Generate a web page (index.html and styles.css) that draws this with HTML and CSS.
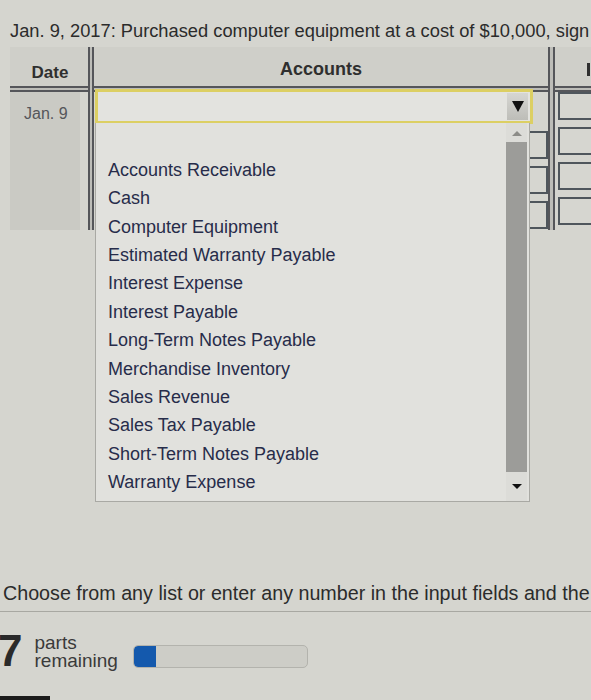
FILE: index.html
```html
<!DOCTYPE html>
<html>
<head>
<meta charset="utf-8">
<link rel="stylesheet" href="styles.css">
</head>
<body>
<div class="page">
  <p class="title">Jan. 9, 2017: Purchased computer equipment at a cost of $10,000, sign</p>
  <div class="journal">
    <div class="hdr date-h">Date</div>
    <div class="vline v1"></div>
    <div class="hdr acc-h">Accounts</div>
    <div class="vline v2"></div>
    <div class="hdr deb-h"><span class="deb-mark"></span></div>
    <div class="hline"></div>
    <div class="date-body"><span>Jan. 9</span></div>
    <div class="acc-body">
      <div class="select">
        <div class="select-val"></div>
        <div class="select-btn"><span class="tri-down"></span></div>
      </div>
      <div class="row"><div class="box small"></div></div>
      <div class="row"><div class="box small"></div></div>
      <div class="row"><div class="box small"></div></div>
      <div class="list">
        <ul class="items">
          <li>Accounts Receivable</li>
          <li>Cash</li>
          <li>Computer Equipment</li>
          <li>Estimated Warranty Payable</li>
          <li>Interest Expense</li>
          <li>Interest Payable</li>
          <li>Long-Term Notes Payable</li>
          <li>Merchandise Inventory</li>
          <li>Sales Revenue</li>
          <li>Sales Tax Payable</li>
          <li>Short-Term Notes Payable</li>
          <li>Warranty Expense</li>
        </ul>
        <div class="scrollbar">
          <div class="sb-up"><span class="tri-up"></span></div>
          <div class="sb-thumb"></div>
          <div class="sb-down"><span class="tri-down sm"></span></div>
        </div>
      </div>
    </div>
    <div class="deb-body">
      <div class="box wide"></div>
      <div class="box wide"></div>
      <div class="box wide"></div>
      <div class="box wide"></div>
    </div>
  </div>
  <p class="hint">Choose from any list or enter any number in the input fields and the</p>
  <div class="rule"></div>
  <div class="parts">
    <span class="num">7</span>
    <span class="parts-label"><span class="pl">parts</span><span class="pl">remaining</span></span>
    <div class="progress"><div class="fill"></div></div>
  </div>
  <div class="strip"></div>
</div>
</body>
</html>
```

FILE: styles.css
```css
html, body {
  margin: 0;
  padding: 0;
}
body {
  background: #d5d5cf;
  font-family: "Liberation Sans", Arial, sans-serif;
  color: #2d2d2d;
  overflow: hidden;
  width: 591px;
  height: 700px;
}
.page {
  width: 591px;
  overflow: hidden;
}
.title {
  margin: 0;
  padding: 20px 0 0 10px;
  font-size: 18.3px;
  line-height: 22px;
  white-space: nowrap;
  color: #2b2b2b;
}
.journal {
  margin-top: 5px;
  margin-left: 10px;
  display: grid;
  grid-template-columns: 78px 6px 454px 7px 60px;
  grid-template-rows: 39px 6px 138px;
}
.hdr {
  grid-row: 1;
  font-weight: bold;
  display: flex;
  align-items: center;
  justify-content: center;
  color: #2f2f2f;
  background: #cfcfc9;
}
.date-h {
  grid-column: 1;
  font-size: 17px;
  padding-top: 12px;
  padding-left: 2px;
}
.acc-h {
  grid-column: 3;
  font-size: 18px;
  padding-top: 6px;
}
.deb-h {
  grid-column: 5;
  justify-content: flex-start;
  padding-left: 32px;
  padding-top: 6px;
}
.deb-mark {
  width: 3px;
  height: 13px;
  background: #2f2f2f;
}
.vline {
  grid-row: 1 / 4;
  box-sizing: border-box;
  border-left: 2px solid #55565a;
  border-right: 2px solid #55565a;
  background: #bdbdb8;
  z-index: 1;
}
.v1 { grid-column: 2; }
.v2 { grid-column: 4; }
.hline {
  grid-row: 2;
  grid-column: 1 / -1;
  box-sizing: border-box;
  border-top: 2px solid #55565a;
  border-bottom: 2px solid #55565a;
  background: #bdbdb8;
}
.date-body {
  grid-row: 3;
  grid-column: 1;
  width: 70px;
  background: #cacac4;
  font-size: 16px;
  color: #55565a;
  padding: 13px 0 0 14px;
  box-sizing: border-box;
}
.acc-body {
  grid-row: 3;
  grid-column: 3;
  position: relative;
}
.select {
  margin: -3px 0 0 1px;
  width: 438px;
  height: 35px;
  box-sizing: border-box;
  border: 3px solid #dccf63;
  background: #e3e3df;
  display: flex;
  align-items: stretch;
  padding: 1px 2px 1px 0;
}
.select-val {
  flex: 1;
}
.select-btn {
  width: 21px;
  background: linear-gradient(#d6d6d2, #bdbdb8);
  display: flex;
  align-items: center;
  justify-content: center;
}
.tri-down {
  width: 0;
  height: 0;
  border-left: 6px solid transparent;
  border-right: 6px solid transparent;
  border-top: 11px solid #111;
}
.tri-down.sm {
  border-left-width: 5px;
  border-right-width: 5px;
  border-top-width: 5px;
}
.tri-up {
  width: 0;
  height: 0;
  border-left: 5px solid transparent;
  border-right: 5px solid transparent;
  border-bottom: 5px solid #8c8c88;
}
.row {
  height: 35px;
  display: flex;
  align-items: flex-end;
}
.box {
  box-sizing: border-box;
  border: 2px solid #4f565c;
  background: #d6d6d0;
  height: 28px;
}
.box.small {
  width: 20px;
  margin-left: 434px;
}
.deb-body {
  grid-row: 3;
  grid-column: 5;
  display: flex;
  flex-direction: column;
  gap: 7px;
  padding-left: 3px;
}
.box.wide {
  width: 50px;
}
.list {
  position: absolute;
  top: 31px;
  left: 1px;
  width: 435px;
  height: 379px;
  box-sizing: border-box;
  background: #e1e1dd;
  border: 1px solid #a9a9a4;
  border-top: none;
  z-index: 5;
}
.items {
  list-style: none;
  margin: 0;
  padding: 33px 0 0 12px;
  font-size: 18px;
  line-height: 28.36px;
  color: #272c4a;
}
.scrollbar {
  position: absolute;
  top: 0;
  right: 2px;
  bottom: 0;
  width: 21px;
  display: flex;
  flex-direction: column;
  background: #dcdcd8;
}
.sb-up {
  height: 19px;
  display: flex;
  align-items: center;
  justify-content: center;
  padding-top: 2px;
  box-sizing: border-box;
}
.sb-thumb {
  height: 330px;
  background: #9c9c99;
}
.sb-down {
  flex: 1;
  display: flex;
  align-items: center;
  justify-content: center;
}
.hint {
  margin: 351px 0 0 0;
  padding-left: 3px;
  font-size: 19.7px;
  line-height: 24px;
  white-space: nowrap;
  color: #2b2b2b;
}
.rule {
  margin-top: 6px;
  height: 1px;
  background: #a8a8a2;
}
.parts {
  display: flex;
  align-items: center;
  margin-top: 14px;
  height: 50px;
}
.num {
  font-size: 44px;
  font-weight: bold;
  line-height: 44px;
  margin-left: -2px;
  color: #2a2a2a;
}
.parts-label {
  margin-left: 12px;
  display: flex;
  flex-direction: column;
  font-size: 19px;
  color: #3a3a3a;
  padding-top: 2px;
}
.pl {
  line-height: 18px;
  height: 18px;
}
.progress {
  margin-left: 15px;
  width: 175px;
  height: 23px;
  box-sizing: border-box;
  border: 1px solid #b3b3ad;
  border-radius: 5px;
  background: #cdcdc7;
  overflow: hidden;
  margin-top: 10px;
}
.fill {
  width: 22px;
  height: 100%;
  background: #1459ad;
  border-radius: 4px 0 0 4px;
}
.strip {
  margin-top: 20px;
  width: 50px;
  height: 6px;
  background: #1c1c1c;
}
```
